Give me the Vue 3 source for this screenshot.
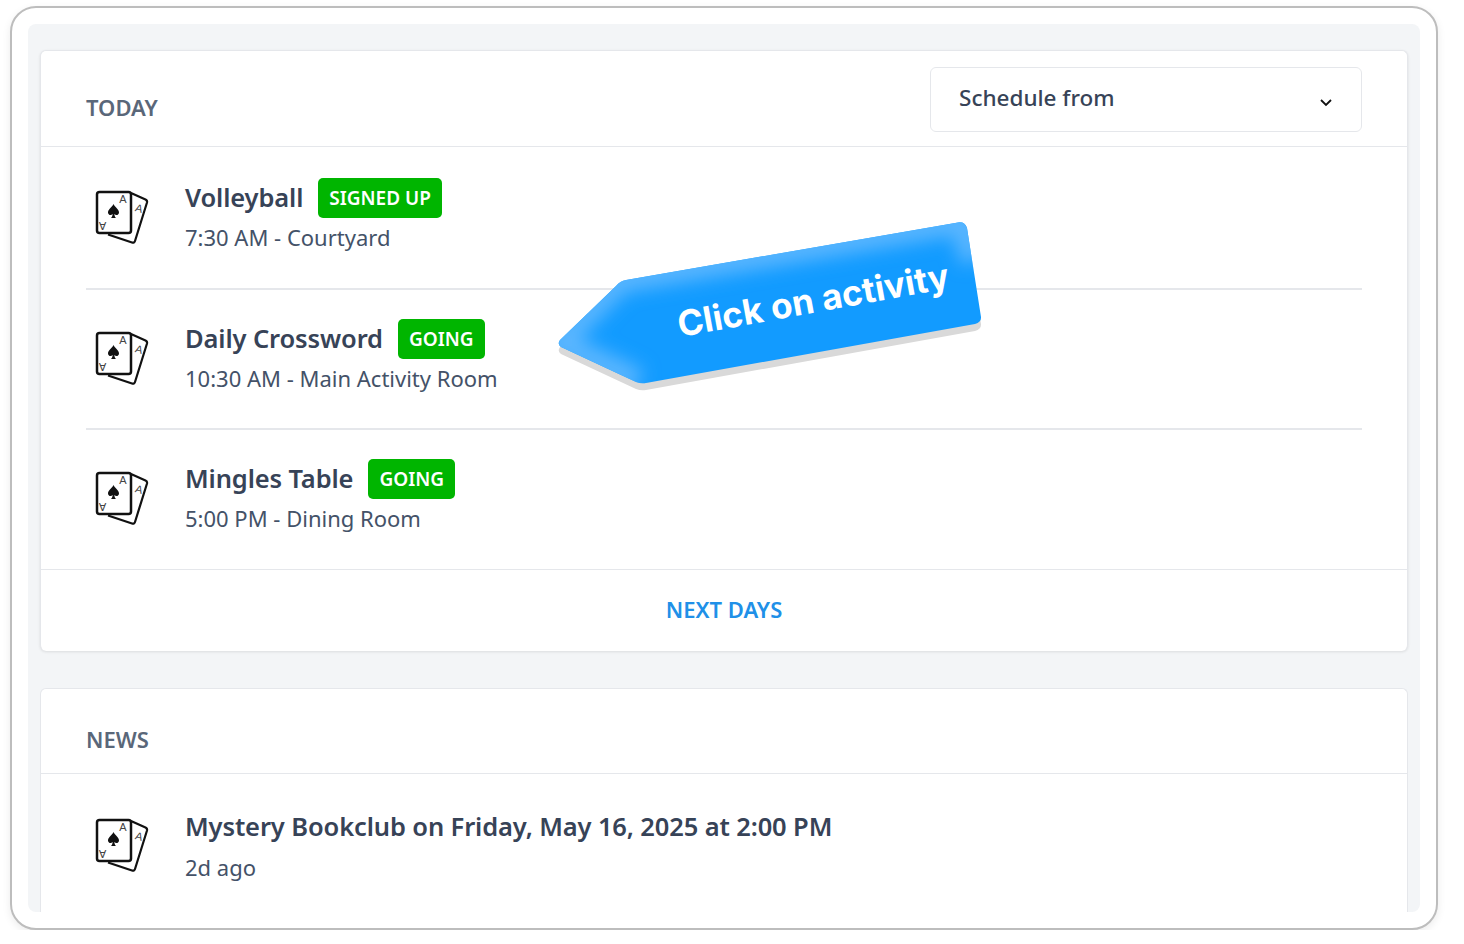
<script setup>
const activities = [
  { title: 'Volleyball', badge: 'SIGNED UP', sub: '7:30 AM - Courtyard' },
  { title: 'Daily Crossword', badge: 'GOING', sub: '10:30 AM - Main Activity Room' },
  { title: 'Mingles Table', badge: 'GOING', sub: '5:00 PM - Dining Room' },
]
</script>

<template>
  <div class="page">
    <div class="frame">
      <div class="inner">
        <section class="card">
          <header class="head today">
            <span class="label">TODAY</span>
            <div class="select">
              <span>Schedule from</span>
              <svg width="14" height="14" viewBox="0 0 14 14"><path d="M2 5 L7 10 L12 5" fill="none" stroke="#111" stroke-width="1.800" /></svg>
            </div>
          </header>

          <div class="rows">
            <div v-for="a in activities" :key="a.title" class="row">
              <svg class="icon" width="56" height="56" viewBox="0 0 56 56">
                <path d="M37 4 L51.500 10.500 Q53.500 11.500 53 13.500 L41 52 Q40.300 54.300 38 53.500 L14 45.500" fill="#fff" stroke="#111" stroke-width="2.200" stroke-linejoin="round" />
                <rect x="3" y="3" width="34" height="41" rx="2.500" fill="#fff" stroke="#111" stroke-width="2.500" />
                <path d="M19.500 15 C21 18.500 25 20 25 23.500 C25 26 22 27 20.300 25 C20.400 26.500 21 28 22 29 L17 29 C18 28 18.600 26.500 18.700 25 C17 27 14 26 14 23.500 C14 20 18 18.500 19.500 15 Z" fill="#111" />
                <text x="29" y="14" class="ace" text-anchor="middle">A</text>
                <text class="ace" text-anchor="middle" transform="translate(8.500 33) rotate(180)">A</text>
                <text class="ace" text-anchor="middle" transform="translate(44 23) rotate(16)">A</text>
              </svg>
              <div>
                <div class="title-line">
                  <span class="title">{{ a.title }}</span>
                  <span class="badge">{{ a.badge }}</span>
                </div>
                <div class="sub">{{ a.sub }}</div>
              </div>
            </div>
          </div>

          <div class="next">NEXT DAYS</div>
        </section>

        <section class="card news">
          <header class="head">
            <span class="label">NEWS</span>
          </header>
          <div class="news-row">
            <svg class="icon" width="56" height="56" viewBox="0 0 56 56">
              <path d="M37 4 L51.500 10.500 Q53.500 11.500 53 13.500 L41 52 Q40.300 54.300 38 53.500 L14 45.500" fill="#fff" stroke="#111" stroke-width="2.200" stroke-linejoin="round" />
              <rect x="3" y="3" width="34" height="41" rx="2.500" fill="#fff" stroke="#111" stroke-width="2.500" />
              <path d="M19.500 15 C21 18.500 25 20 25 23.500 C25 26 22 27 20.300 25 C20.400 26.500 21 28 22 29 L17 29 C18 28 18.600 26.500 18.700 25 C17 27 14 26 14 23.500 C14 20 18 18.500 19.500 15 Z" fill="#111" />
              <text x="29" y="14" class="ace" text-anchor="middle">A</text>
              <text class="ace" text-anchor="middle" transform="translate(8.500 33) rotate(180)">A</text>
              <text class="ace" text-anchor="middle" transform="translate(44 23) rotate(16)">A</text>
            </svg>
            <div>
              <div class="title-line"><span class="title">Mystery Bookclub on Friday, May 16, 2025 at 2:00 PM</span></div>
              <div class="sub news-sub">2d ago</div>
            </div>
          </div>
        </section>
      </div>

      <svg class="callout" width="440" height="190" viewBox="0 0 440 190">
        <defs>
          <clipPath id="callout-clip">
            <path d="M58 65 Q62 60 68 59 L400 1.500 Q407 0.500 409 7 L423 96 Q423.500 101 417 103 L88 162 Q83 163 78 161 L3 126 Q-1 123 2 119 Z" />
          </clipPath>
          <filter id="soft" x="-10%" y="-30%" width="120%" height="160%"><feGaussianBlur stdDeviation="9" /></filter>
        </defs>
        <path transform="translate(0 7)" d="M58 65 Q62 60 68 59 L400 1.500 Q407 0.500 409 7 L423 96 Q423.500 101 417 103 L88 162 Q83 163 78 161 L3 126 Q-1 123 2 119 Z" fill="#d9d9d9" />
        <path d="M58 65 Q62 60 68 59 L400 1.500 Q407 0.500 409 7 L423 96 Q423.500 101 417 103 L88 162 Q83 163 78 161 L3 126 Q-1 123 2 119 Z" fill="#129bff" />
        <g clip-path="url(#callout-clip)">
          <path d="M80 161 L0 122 L62 59 L405 0 L415 40" fill="none" stroke="#5ab6ff" stroke-width="26" filter="url(#soft)" />
        </g>
        <text class="callout-text" transform="translate(122 116) rotate(-10.300)">Click on activity</text>
      </svg>
    </div>
  </div>
</template>

<style>
html, body { margin: 0; background: #fff; }
</style>

<style scoped>
.page {
  padding: 6px 0 0 10px;
  font-family: "Noto Sans", "Open Sans", sans-serif;
  color: #374357;
}
.ace { font-family: "Liberation Sans", sans-serif; font-size: 11px; fill: #444; }

.frame {
  position: relative;
  box-sizing: border-box;
  width: 1428px;
  height: 924px;
  padding: 16px;
  border: 2px solid #bdbdbd;
  border-radius: 26px;
  background: #fff;
  box-shadow: 0 3px 8px rgba(0, 0, 0, 0.08);
}
.inner {
  box-sizing: border-box;
  height: 888px;
  padding: 26px 12px 0;
  background: #f3f5f7;
  border-radius: 8px;
  overflow: hidden;
  display: flex;
  flex-direction: column;
  gap: 37px;
}
.card {
  background: #fff;
  border: 1px solid #e5e7eb;
  border-bottom: 0;
  border-radius: 6px;
  box-shadow: 0 1px 3px rgba(0, 0, 0, 0.1);
}
.news { flex: 1; box-shadow: none; border-radius: 6px 6px 0 0; }

.head {
  display: flex;
  justify-content: space-between;
  align-items: center;
  padding: 0 45px;
  height: 84px;
  border-bottom: 1px solid #e5e7eb;
}
.head.today { height: 95px; }
.label {
  font-size: 22px;
  font-weight: 600;
  color: #5a6779;
  padding-top: 16px;
}
.select {
  box-sizing: border-box;
  width: 432px;
  height: 65px;
  margin-top: 2px;
  padding: 0 28px 4px;
  display: flex;
  align-items: center;
  justify-content: space-between;
  border: 1px solid #e5e7eb;
  border-radius: 6px;
  font-size: 22.500px;
  font-weight: 500;
}
.select svg { margin-top: 8px; }

.rows { padding: 0 45px; }
.row {
  display: flex;
  align-items: center;
  padding: 29px 0;
  border-bottom: 2px solid #e5e7eb;
}
.row:first-child { padding: 31px 0 30px; }
.row:last-child { padding-bottom: 30px; border-bottom: 0; }
.icon { margin: -3px 35px 0 8px; flex: none; }
.title-line {
  display: flex;
  align-items: center;
  gap: 15px;
  height: 40px;
}
.title { font-size: 25.500px; font-weight: 600; padding-bottom: 2px; letter-spacing: -0.12px; }
.badge {
  display: flex;
  align-items: center;
  height: 40px;
  padding: 0 11px;
  border-radius: 5px;
  background: #00b500;
  color: #fff;
  font-size: 19px;
  font-weight: 600;
}
.sub { font-size: 22px; line-height: 38px; padding-bottom: 2px; color: #445268; }
.news-sub { line-height: 40px; padding: 0; }

.next {
  border-top: 1px solid #e5e7eb;
  height: 81px;
  line-height: 78px;
  text-align: center;
  font-size: 22px;
  font-weight: 600;
  color: #2090e8;
}

.news-row {
  display: flex;
  align-items: center;
  padding: 32px 45px 0;
}
.news-row .title-line { padding-top: 1px; }

.callout {
  position: absolute;
  left: 546px;
  top: 213px;
  overflow: visible;
}
.callout-text {
  font-family: Inter, sans-serif;
  font-size: 35.200px;
  font-weight: 700;
  fill: #fff;
}
</style>
